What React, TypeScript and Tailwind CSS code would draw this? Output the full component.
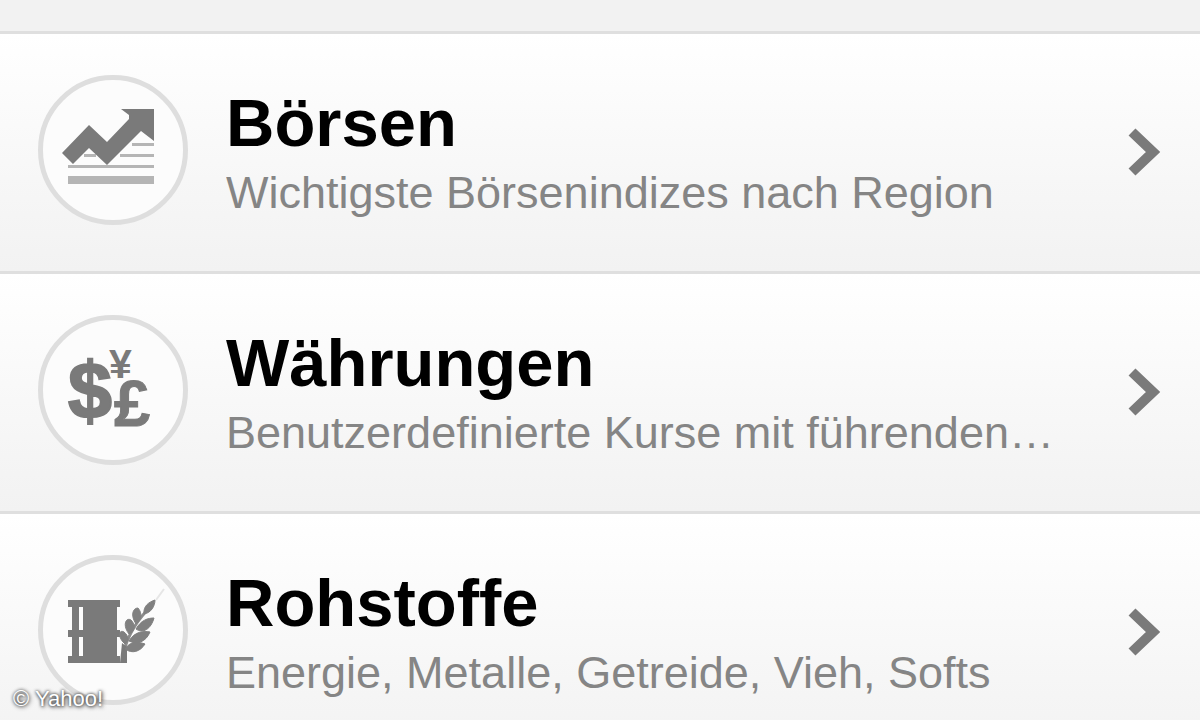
import type { ReactNode } from 'react';

type Category = {
  title: string;
  description: string;
  href: string;
  icon: ReactNode;
};

function MarketsIcon() {
  return (
    <svg viewBox="0 0 150 150" className="size-full" aria-hidden="true">
      <g fill="#b5b5b5">
        <rect x="30" y="101" width="86" height="8" />
        <rect x="30" y="90" width="86" height="3" />
        <rect x="82" y="79" width="34" height="3" />
        <rect x="46" y="79" width="12" height="3" />
        <rect x="94" y="68" width="22" height="3" />
      </g>
      <path
        d="M24 78L51 50L69 67L91 44V40L83 34H116V66L103 56L69 90L51 73L35 89Z"
        fill="#7a7a7a"
      />
    </svg>
  );
}

function CurrenciesIcon() {
  return (
    <svg
      viewBox="0 0 150 150"
      className="size-full font-['Liberation_Sans',sans-serif] font-bold"
      fill="#7a7a7a"
      stroke="#7a7a7a"
      aria-hidden="true"
    >
      <text x="30" y="103" fontSize="79" strokeWidth="2">$</text>
      <text x="71" y="63" fontSize="41" strokeWidth="0">¥</text>
      <text x="76" y="111" fontSize="65" strokeWidth="1">£</text>
    </svg>
  );
}

function CommoditiesIcon() {
  return (
    <svg viewBox="0 0 150 150" className="size-full" fill="#7a7a7a" aria-hidden="true">
      <path
        d="M30 45H82V52H79V75H82V82H79V101H82V108H30V101H34V82H30V75H34V52H30ZM41 52V75H45V52ZM41 82V101H45V82Z"
        fillRule="evenodd"
      />
      <path d="M86 96C90 80 98 66 114 50" fill="none" stroke="#8c8c8c" strokeWidth="3" />
      <path d="M82 108L84 88L89 92V108Z" />
      <g fill="#808080" stroke="#808080" strokeWidth="1">
        <path d="M87 89C79 82 81 74 86 77C91 81 91 86 87 89Z" />
        <path d="M91 79C84 70 88 62 93 65C98 70 97 76 91 79Z" />
        <path d="M98 69C92 60 95 53 100 53C105 59 103 65 98 69Z" />
        <path d="M106 59C105 51 111 47 117 45C117 51 113 58 106 59Z" />
        <path d="M87 94C93 85 101 87 107 89C102 97 94 99 87 94Z" />
        <path d="M91 86C97 76 106 76 112 77C108 87 99 90 91 86Z" />
        <path d="M98 74C103 65 110 63 116 63C113 74 105 79 98 74Z" />
      </g>
      <path d="M118 45L126 34" stroke="#e6e6e6" strokeWidth="2" />
    </svg>
  );
}

function Chevron() {
  return (
    <svg viewBox="0 0 34 48" className="mt-1 h-12 w-[34px] shrink-0" aria-hidden="true">
      <path d="M4 4L25 24L4 44" fill="none" stroke="#7a7a7a" strokeWidth="10" />
    </svg>
  );
}

const categories: Category[] = [
  {
    title: 'Börsen',
    description: 'Wichtigste Börsenindizes nach Region',
    href: '#boersen',
    icon: <MarketsIcon />,
  },
  {
    title: 'Währungen',
    description: 'Benutzerdefinierte Kurse mit führenden…',
    href: '#waehrungen',
    icon: <CurrenciesIcon />,
  },
  {
    title: 'Rohstoffe',
    description: 'Energie, Metalle, Getreide, Vieh, Softs',
    href: '#rohstoffe',
    icon: <CommoditiesIcon />,
  },
];

function CategoryRow({ title, description, href, icon }: Category) {
  return (
    <li>
      <a
        href={href}
        className="flex items-center border-t-3 border-[#dfdfdf] bg-linear-to-b from-white to-[#f2f2f2] pt-[41px] pr-[38px] pb-[46px] pl-[38px]"
      >
        <span className="flex size-[150px] shrink-0 rounded-full border-[5px] border-[#dedede] bg-[#fcfcfc]">
          <span className="-m-[5px] block size-[150px] shrink-0">{icon}</span>
        </span>
        <span className="ml-[38px] min-w-0 flex-1 pt-1.5">
          <span className="block text-[67px] leading-[80px] font-bold text-black">{title}</span>
          <span className="block truncate text-[45px] leading-[60px] text-[#858585]">{description}</span>
        </span>
        <Chevron />
      </a>
    </li>
  );
}

export default function App() {
  return (
    <main className="relative h-screen overflow-hidden bg-[#f2f2f2] pt-[31px] font-['Liberation_Sans',Arial,sans-serif]">
      <ul>
        {categories.map((category) => (
          <CategoryRow key={category.title} {...category} />
        ))}
      </ul>
      <small className="absolute bottom-[7px] left-[13px] text-[22px] leading-7 text-white [text-shadow:0_0_3px_#333,1px_1px_4px_#333]">
        © Yahoo!
      </small>
    </main>
  );
}
